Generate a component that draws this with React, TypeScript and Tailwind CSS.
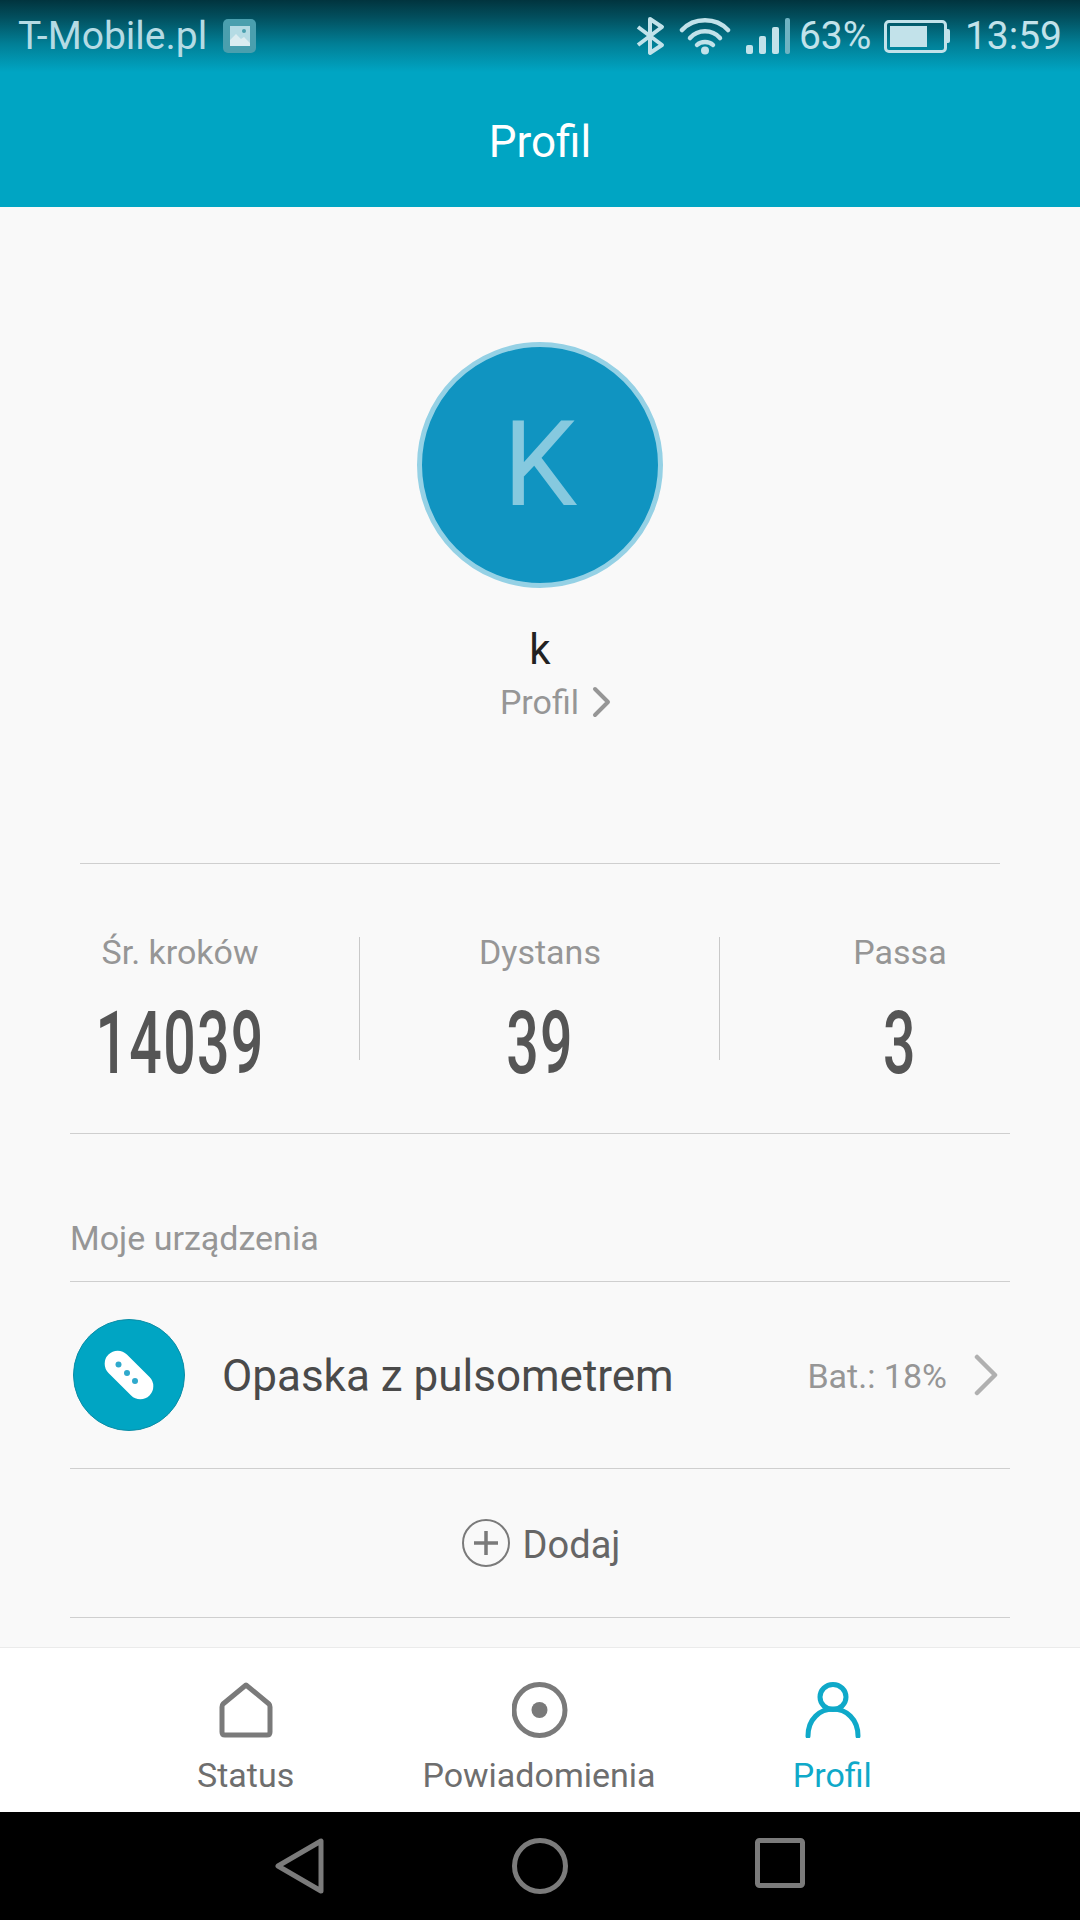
import React from "react";

function StatusIcons() {
  return (
    <div className="flex items-center text-[39px] leading-none text-[#c2e2ea]">
      <svg width="30" height="40" viewBox="0 0 30 40" fill="none" stroke="#c2e2ea" strokeWidth="4" className="mr-[13px]">
        <path d="M2 11 L26 29 L14 37 L14 3 L26 11 L2 29" strokeLinejoin="round" />
      </svg>
      <svg width="52" height="38" viewBox="0 0 52 38" fill="none" stroke="#c2e2ea" strokeWidth="4.5" strokeLinecap="round" className="mr-[15px]">
        <path d="M3 13 C15 0 37 0 49 13" />
        <path d="M11 21 C19 12 33 12 41 21" />
        <path d="M18 28 C22 24 30 24 34 28" />
        <circle cx="26" cy="33.5" r="4" fill="#c2e2ea" stroke="none" />
      </svg>
      <div className="flex items-end gap-[6px] h-[36px] mr-[9px]">
        <div className="w-[7px] h-[9px] rounded-[2px] bg-[#c2e2ea]" />
        <div className="w-[7px] h-[18px] rounded-[2px] bg-[#c2e2ea]" />
        <div className="w-[7px] h-[27px] rounded-[2px] bg-[#c2e2ea]" />
        <div className="w-[5px] h-[36px] rounded-[2px] bg-[#6fb3c2]" />
      </div>
      <span className="mr-[13px] w-[72px]">63%</span>
      <div className="flex items-center mr-[15px]">
        <div className="w-[63px] h-[33px] rounded-[5px] border-[3px] border-[#c2e2ea] p-[3px]">
          <div className="h-full w-[37px] bg-[#c2e2ea]" />
        </div>
        <div className="w-[3px] h-[14px] bg-[#c2e2ea] rounded-r-[2px]" />
      </div>
      <span>13:59</span>
    </div>
  );
}

function Stat({ label, value, border }: { label: string; value: string; border?: boolean }) {
  return (
    <div className="relative flex flex-col items-center">
      <div className="h-[40px] -mt-[5px] text-[34px] leading-[40px] text-[#969696]">{label}</div>
      <div className="mt-[26px] h-[90px] text-[88px] leading-[90px] font-medium text-[#555555] scale-x-[0.65] tracking-[2px]">{value}</div>
      {border && <div className="absolute right-0 top-0 h-[123px] w-[1px] bg-[#c9c9c9]" />}
    </div>
  );
}

function NavItem({ label, active, children }: { label: string; active?: boolean; children: React.ReactNode }) {
  return (
    <div className="flex flex-col items-center">
      <div className="h-[56px] mt-[34px]">{children}</div>
      <div className={`mt-[17px] -ml-[2px] text-[34px] leading-[40px] ${active ? "text-[#0fa9c9]" : "text-[#6e6e6e]"}`}>{label}</div>
    </div>
  );
}

export default function App() {
  return (
    <div className="w-[1080px] h-[1920px] flex flex-col overflow-hidden bg-[#f9f9f9] font-['Roboto',sans-serif]">
      <header className="h-[207px] shrink-0 bg-[linear-gradient(to_bottom,#01343e_0px,#02505f_18px,#017f96_44px,#00a5c3_72px,#00a5c3_100%)] flex flex-col">
        <div className="h-[72px] flex items-center justify-between pl-[18px] pr-[18px]">
          <div className="flex items-center">
            <span className="text-[39px] leading-none text-[#b5dbe4]">T-Mobile.pl</span>
            <div className="ml-[16px] w-[33px] h-[34px] rounded-[5px] bg-[#4a9fae] flex items-center justify-center">
              <svg width="20" height="20" viewBox="0 0 20 20">
                <path d="M0 0H20V20L0 14Z" fill="#b5dbe4" />
                <path d="M0 14 L6 8 L11 13 L14 11 L20 17 V20 H0Z" fill="#dcecf0" />
                <circle cx="14" cy="5" r="2" fill="#4a9fae" />
              </svg>
            </div>
          </div>
          <StatusIcons />
        </div>
        <div className="flex-1 flex items-center justify-center pt-[5px] text-[44px] text-white">Profil</div>
      </header>

      <main className="flex-1 flex flex-col min-h-0">
        <div className="mt-[135px] mx-auto w-[246px] h-[246px] rounded-full bg-[#1094c1] border-[5px] border-[#95d1e5] flex items-center justify-center text-[118px] leading-none text-[#86c9df]">
          K
        </div>
        <div className="mt-[37px] text-center text-[42px] leading-[50px] text-[#222222]">k</div>
        <div className="mt-[2px] mb-[13px] h-[50px] flex items-center justify-center text-[34px] text-[#969696]">
          <span className="ml-[32px]">Profil</span>
          <svg width="20" height="32" viewBox="0 0 20 32" fill="none" stroke="#969696" strokeWidth="4" strokeLinecap="round" strokeLinejoin="round" className="ml-[13px]">
            <path d="M3 3 L16 16 L3 29" />
          </svg>
        </div>

        <div className="mt-[123px] mx-[80px] h-[1px] bg-[#cfcfcf]" />
        <div className="mt-[73px] grid grid-cols-3">
          <Stat label="Śr. kroków" value="14039" border />
          <Stat label="Dystans" value="39" border />
          <Stat label="Passa" value="3" />
        </div>
        <div className="mt-[45px] mx-[70px] h-[1px] bg-[#cfcfcf]" />

        <div className="mx-[70px] h-[147px] flex items-end pb-[23px] text-[34px] leading-[40px] text-[#969696]">Moje urządzenia</div>
        <div className="mx-[70px] h-[1px] bg-[#cfcfcf]" />
        <div className="mx-[70px] h-[186px] flex items-center">
          <div className="ml-[3px] w-[112px] h-[112px] rounded-full bg-[#00a5c3] border-[1px] border-[#0b8da6] flex items-center justify-center shrink-0">
            <svg width="54" height="54" viewBox="0 0 54 54">
              <rect x="-2" y="14" width="58" height="26" rx="13" fill="#ffffff" transform="rotate(45 27 27)" />
              <circle cx="16.5" cy="16.5" r="3" fill="#2fa9cc" />
              <circle cx="25" cy="25" r="3" fill="#2fa9cc" />
              <circle cx="33" cy="33" r="3" fill="#2fa9cc" />
            </svg>
          </div>
          <span className="ml-[37px] mt-[2px] text-[44px] text-[#4a4a4a]">Opaska z pulsometrem</span>
          <span className="ml-auto mt-[2px] text-[34px] text-[#969696]">Bat.: 18%</span>
          <svg width="24" height="42" viewBox="0 0 24 42" fill="none" stroke="#b0b0b0" strokeWidth="4.5" strokeLinecap="round" strokeLinejoin="round" className="ml-[27px] mr-[12px]">
            <path d="M3 3 L21 21 L3 39" />
          </svg>
        </div>
        <div className="mx-[70px] h-[1px] bg-[#cfcfcf]" />
        <div className="mx-[70px] h-[148px] flex items-center justify-center">
          <svg width="48" height="48" viewBox="0 0 48 48" fill="none" stroke="#7a7a7a" className="ml-[2px]">
            <circle cx="24" cy="24" r="23" strokeWidth="2" />
            <path d="M12 24 H36 M24 12 V36" strokeWidth="3.5" />
          </svg>
          <span className="ml-[13px] mt-[4px] text-[38px] text-[#666666]">Dodaj</span>
        </div>
        <div className="mx-[70px] h-[1px] bg-[#cfcfcf]" />
      </main>

      <nav className="h-[165px] shrink-0 bg-white border-t-[1px] border-[#ebebeb]">
        <div className="w-[880px] mx-auto grid grid-cols-3">
          <NavItem label="Status">
            <svg width="56" height="56" viewBox="0 0 56 56" fill="none" stroke="#7a7a7a" strokeWidth="5" strokeLinejoin="round">
              <path d="M27 3 L50 22 Q51 23 51 25 V50 Q51 53 48 53 H6 Q3 53 3 50 V25 Q3 23 4 22 Z" />
            </svg>
          </NavItem>
          <NavItem label="Powiadomienia">
            <svg width="56" height="56" viewBox="0 0 56 56" fill="none">
              <circle cx="27.5" cy="28" r="25.5" stroke="#7a7a7a" strokeWidth="5" />
              <circle cx="27.5" cy="28" r="8" fill="#7a7a7a" />
            </svg>
          </NavItem>
          <NavItem label="Profil" active>
            <svg width="56" height="56" viewBox="0 0 56 56" fill="none" stroke="#0fa9c9" strokeWidth="5" strokeLinecap="round">
              <ellipse cx="28" cy="15" rx="13" ry="12.5" />
              <path d="M3 54 C3 37 15 27 28 27 C41 27 53 37 53 54" />
            </svg>
          </NavItem>
        </div>
      </nav>

      <div className="h-[108px] shrink-0 bg-black flex items-center">
        <div className="w-[720px] mx-auto grid grid-cols-3 justify-items-center">
          <svg width="50" height="56" viewBox="0 0 50 56" fill="none" stroke="#7b7b7b" strokeWidth="5" strokeLinejoin="round">
            <path d="M46 3 V53 L3 28 Z" />
          </svg>
          <svg width="56" height="56" viewBox="0 0 56 56" fill="none" stroke="#7b7b7b" strokeWidth="5">
            <circle cx="28" cy="28" r="25.5" />
          </svg>
          <svg width="50" height="50" viewBox="0 0 50 50" fill="none" stroke="#7b7b7b" strokeWidth="5" strokeLinejoin="round">
            <rect x="2.5" y="2.5" width="45" height="45" rx="2" />
          </svg>
        </div>
      </div>
    </div>
  );
}
